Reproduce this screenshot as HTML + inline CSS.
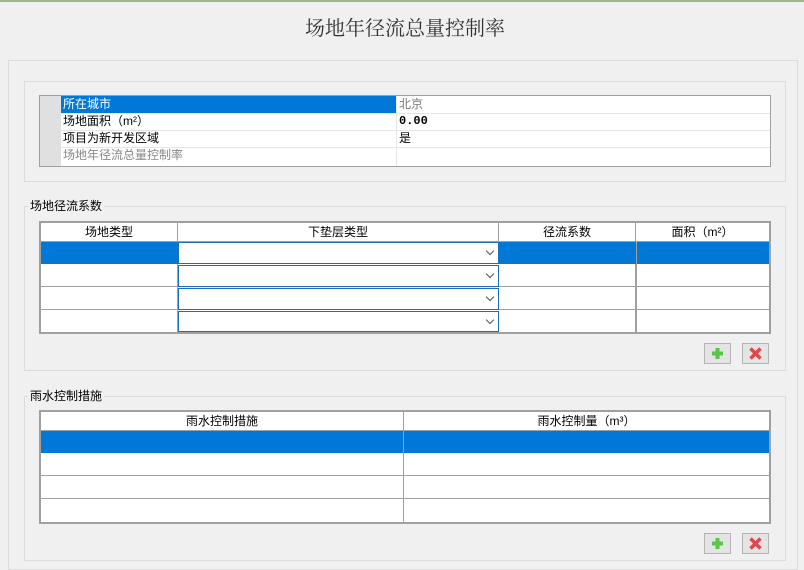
<!DOCTYPE html>
<html><head><meta charset="utf-8"><style>
*{box-sizing:border-box;margin:0;padding:0}
body{width:804px;height:567px;background:#f0f0f0;position:relative;overflow:hidden;font-family:"Liberation Sans","Noto Sans CJK SC",sans-serif;font-size:12px;color:#000}
.a{position:absolute}
.title{left:0;width:810px;top:12px;text-align:center;font-family:"Liberation Serif","Noto Serif CJK SC",serif;font-size:20px;color:#333}
.box{border:1px solid #dcdcdc}
.gl{background:#f0f0f0;padding:0 2px;font-size:12px;line-height:14px}
.tbl{background:#fff;border:2px solid #a0a0a0}
.cell{position:absolute;border-right:1px solid #a0a0a0;border-bottom:1px solid #a0a0a0}
.hd{text-align:center;line-height:18px}
.sel{background:#0078d7}
.dd{position:absolute;border:1px solid #1a6fb5;background:#fff}
.dd:after{content:"";position:absolute;right:5px;top:5px;width:5px;height:5px;border-right:1px solid #555;border-bottom:1px solid #555;transform:rotate(45deg)}
.btn{position:absolute;width:27px;height:21px;border:1px solid #b4b4b4;background:#e4e4e4}
</style></head><body>
<div class="a" style="left:0;top:0;width:804px;height:2px;background:#9cb88a"></div>
<div class="a title">场地年径流总量控制率</div>
<div class="a box" style="left:8px;top:60px;width:790px;height:510px"></div>

<div class="a box" style="left:24px;top:81px;width:762px;height:101px"></div>
<div class="a" style="left:39px;top:95px;width:732px;height:72px;border:1px solid #a0a0a0;background:#fff"></div>
<div class="a" style="left:40px;top:96px;width:21px;height:70px;background:#e0e0e0"></div>
<div class="a sel" style="left:61px;top:96px;width:335px;height:17px;color:#fff;padding-left:2px;line-height:16px">所在城市</div>
<div class="a" style="left:61px;top:113px;width:709px;border-top:1px solid #e6e6e6"></div>
<div class="a" style="left:61px;top:130px;width:709px;border-top:1px solid #e6e6e6"></div>
<div class="a" style="left:61px;top:147px;width:709px;border-top:1px solid #e6e6e6"></div>
<div class="a" style="left:396px;top:96px;height:70px;border-left:1px solid #e6e6e6"></div>
<div class="a" style="left:63px;top:113px;line-height:17px">场地面积（m²）</div>
<div class="a" style="left:63px;top:130px;line-height:17px">项目为新开发区域</div>
<div class="a" style="left:63px;top:147px;line-height:17px;color:#888">场地年径流总量控制率</div>
<div class="a" style="left:399px;top:96px;line-height:16px;color:#777">北京</div>
<div class="a" style="left:399px;top:113px;line-height:17px;font-weight:bold;font-family:'Liberation Mono',monospace">0.00</div>
<div class="a" style="left:399px;top:130px;line-height:17px">是</div>

<div class="a box" style="left:24px;top:206px;width:762px;height:165px"></div>
<div class="a gl" style="left:28px;top:199px">场地径流系数</div>
<div class="a tbl" style="left:39px;top:221px;width:732px;height:113px"></div>
<div class="a" style="left:41px;top:223px;width:728px;height:109px">
 <div class="cell hd" style="left:0;top:0;width:137px;height:19px">场地类型</div>
 <div class="cell hd" style="left:137px;top:0;width:321px;height:19px">下垫层类型</div>
 <div class="cell hd" style="left:458px;top:0;width:137px;height:19px">径流系数</div>
 <div class="cell hd" style="left:595px;top:0;width:133px;height:19px;border-right:0">面积（m²）</div>
 <div class="a sel" style="left:0;top:19px;width:728px;height:22px"></div>
 <div class="cell" style="left:0;top:41px;width:137px;height:23px"></div>
 <div class="cell" style="left:0;top:64px;width:137px;height:23px"></div>
 <div class="cell" style="left:0;top:87px;width:137px;height:22px;border-bottom:0"></div>
 <div class="cell" style="left:458px;top:41px;width:137px;height:23px"></div>
 <div class="cell" style="left:458px;top:64px;width:137px;height:23px"></div>
 <div class="cell" style="left:458px;top:87px;width:137px;height:22px;border-bottom:0"></div>
 <div class="cell" style="left:595px;top:41px;width:133px;height:23px;border-right:0"></div>
 <div class="cell" style="left:595px;top:64px;width:133px;height:23px;border-right:0"></div>
 <div class="a" style="left:595px;top:19px;height:90px;border-left:1px solid #a0a0a0"></div>
 <div class="dd" style="left:137px;top:19px;width:321px;height:22px"></div>
 <div class="dd" style="left:137px;top:42px;width:321px;height:22px"></div>
 <div class="dd" style="left:137px;top:65px;width:321px;height:22px"></div>
 <div class="dd" style="left:137px;top:88px;width:321px;height:21px"></div>
</div>
<div class="btn" style="left:704px;top:343px"><svg width="25" height="19"><path d="M12.5 4v11M7 9.5h11" stroke="#5cc44a" stroke-width="4"/></svg></div>
<div class="btn" style="left:742px;top:343px"><svg width="25" height="19"><path d="M7.5 4.5l10 10M17.5 4.5l-10 10" stroke="#e0474c" stroke-width="3.5"/></svg></div>

<div class="a box" style="left:24px;top:396px;width:762px;height:165px"></div>
<div class="a gl" style="left:28px;top:389px">雨水控制措施</div>
<div class="a tbl" style="left:39px;top:410px;width:732px;height:114px"></div>
<div class="a" style="left:41px;top:412px;width:728px;height:110px">
 <div class="cell hd" style="left:0;top:0;width:363px;height:19px">雨水控制措施</div>
 <div class="cell hd" style="left:363px;top:0;width:365px;height:19px;border-right:0">雨水控制量（m³）</div>
 <div class="a sel" style="left:0;top:19px;width:728px;height:22px"></div>
 <div class="cell" style="left:0;top:41px;width:728px;height:23px;border-right:0"></div>
 <div class="cell" style="left:0;top:64px;width:728px;height:23px;border-right:0"></div>
 <div class="a" style="left:362px;top:19px;height:91px;border-left:1px solid #a0a0a0"></div>
</div>
<div class="btn" style="left:704px;top:533px"><svg width="25" height="19"><path d="M12.5 4v11M7 9.5h11" stroke="#5cc44a" stroke-width="4"/></svg></div>
<div class="btn" style="left:742px;top:533px"><svg width="25" height="19"><path d="M7.5 4.5l10 10M17.5 4.5l-10 10" stroke="#e0474c" stroke-width="3.5"/></svg></div>
</body></html>
